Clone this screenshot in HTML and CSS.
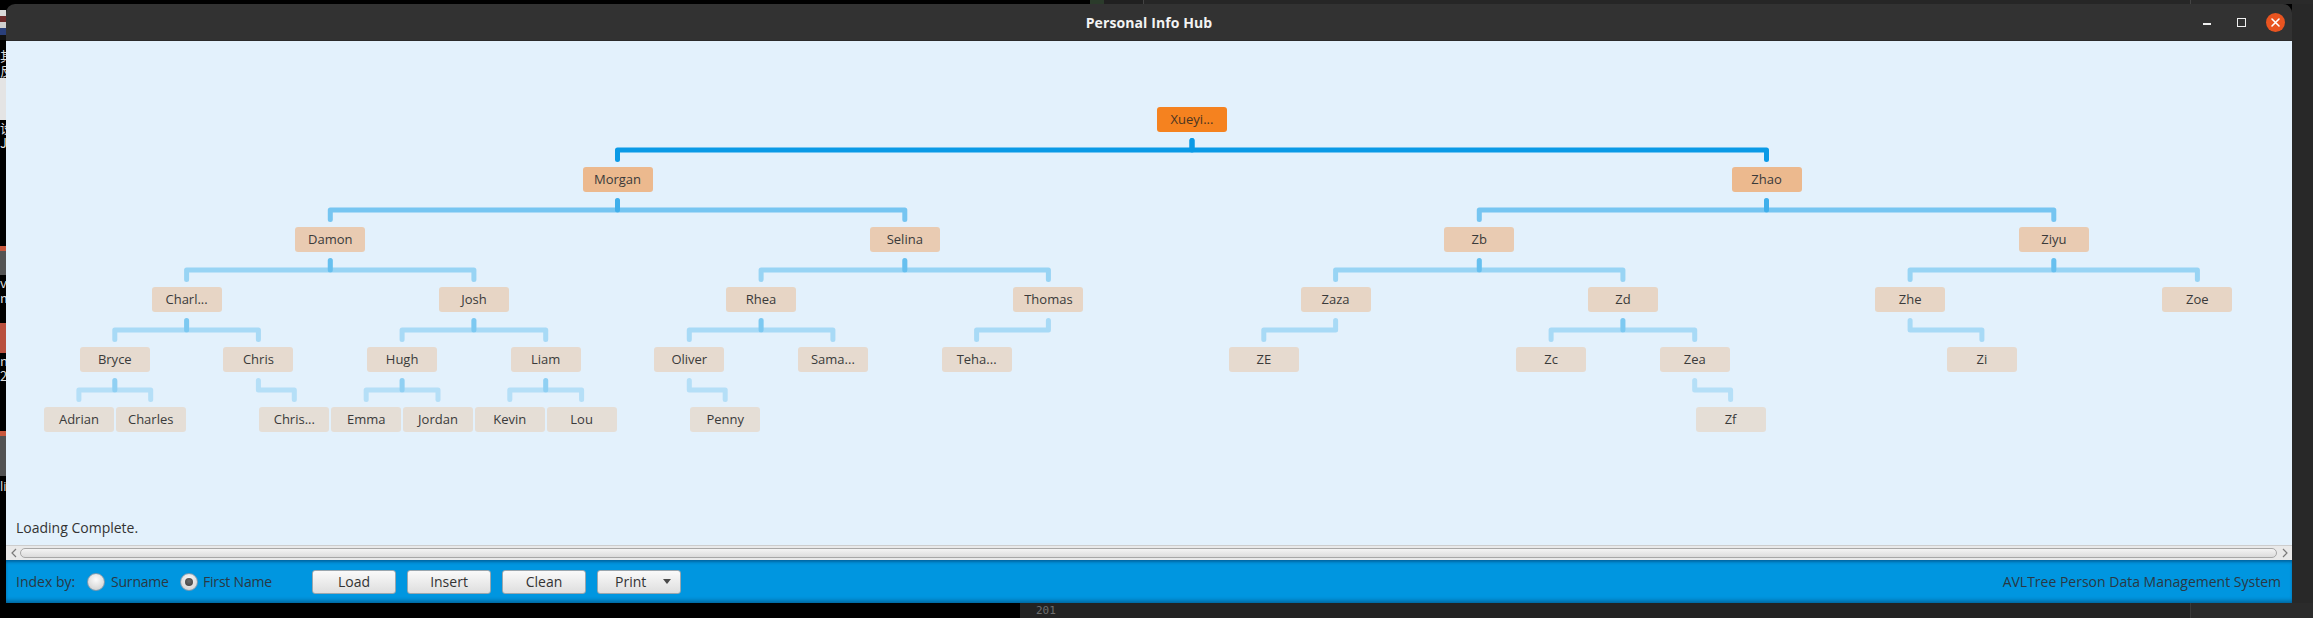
FILE: index.html
```html
<!DOCTYPE html>
<html>
<head>
<meta charset="utf-8">
<title>Personal Info Hub</title>
<link rel="stylesheet" href="styles.css">
</head>
<body>
<div class="desktop">
  <div class="top-strip">
    <div class="seg seg-black"></div>
    <div class="seg seg-green"></div>
    <div class="seg seg-dark1"></div>
    <div class="seg seg-line"></div>
    <div class="seg seg-dark2"></div>
    <div class="seg seg-line"></div>
    <div class="seg seg-dark3"></div>
  </div>
  <div class="mid">
    <div class="left-strip">
      <div class="ls ls-a"></div>
      <div class="ls ls-thumb"></div>
      <div class="ls ls-b"></div>
      <div class="ls ls-txt">其<br>反</div>
      <div class="ls ls-light"></div>
      <div class="ls ls-txt">设<br>Jd</div>
      <div class="ls ls-c"></div>
      <div class="ls ls-red"></div>
      <div class="ls ls-gray"></div>
      <div class="ls ls-txt">v<br>m</div>
      <div class="ls ls-d"></div>
      <div class="ls ls-red2"></div>
      <div class="ls ls-txt">n<br>2</div>
      <div class="ls ls-e"></div>
      <div class="ls ls-red"></div>
      <div class="ls ls-gray2"></div>
      <div class="ls ls-txt2">li</div>
      <div class="ls ls-f"></div>
    </div>
    <div class="window">
      <div class="titlebar">
        <div></div>
        <div class="title">Personal Info Hub</div>
        <div class="controls">
          <div class="ctl ctl-min"><span class="min-line"></span></div>
          <div class="ctl ctl-max"><span class="max-box"></span></div>
          <div class="ctl ctl-close">
            <svg width="19" height="19" viewBox="0 0 19 19"><circle cx="9.5" cy="9.5" r="9.5" fill="#e95420"/><path d="M6 6 L13 13 M13 6 L6 13" stroke="#fff" stroke-width="1.6" stroke-linecap="round"/></svg>
          </div>
        </div>
      </div>
      <div class="content">
        <svg class="edges" width="2286" height="470" viewBox="0 0 2286 470">
          <g class="e e0">
            <path d="M1186 99.5 V109 H611.5 V118.5"/>
            <path d="M1186 99.5 V109 H1760.5 V118.5"/>
          </g>
          <g class="e e1">
            <path d="M611.5 159.5 V169 H324.3 V178.5"/>
            <path d="M611.5 159.5 V169 H898.8 V178.5"/>
            <path d="M1760.5 159.5 V169 H1473.3 V178.5"/>
            <path d="M1760.5 159.5 V169 H2047.8 V178.5"/>
          </g>
          <g class="e e2">
            <path d="M324.3 219.5 V229 H180.6 V238.5"/>
            <path d="M324.3 219.5 V229 H467.9 V238.5"/>
            <path d="M898.8 219.5 V229 H755.1 V238.5"/>
            <path d="M898.8 219.5 V229 H1042.4 V238.5"/>
            <path d="M1473.3 219.5 V229 H1329.6 V238.5"/>
            <path d="M1473.3 219.5 V229 H1616.9 V238.5"/>
            <path d="M2047.8 219.5 V229 H1904.1 V238.5"/>
            <path d="M2047.8 219.5 V229 H2191.4 V238.5"/>
          </g>
          <g class="e e3">
            <path d="M180.6 279.5 V289 H108.8 V298.5"/>
            <path d="M180.6 279.5 V289 H252.4 V298.5"/>
            <path d="M467.9 279.5 V289 H396.1 V298.5"/>
            <path d="M467.9 279.5 V289 H539.7 V298.5"/>
            <path d="M755.1 279.5 V289 H683.3 V298.5"/>
            <path d="M755.1 279.5 V289 H826.9 V298.5"/>
            <path d="M1042.4 279.5 V289 H970.6 V298.5"/>
            <path d="M1329.6 279.5 V289 H1257.8 V298.5"/>
            <path d="M1616.9 279.5 V289 H1545.1 V298.5"/>
            <path d="M1616.9 279.5 V289 H1688.7 V298.5"/>
            <path d="M1904.1 279.5 V289 H1975.9 V298.5"/>
          </g>
          <g class="e e4">
            <path d="M108.8 339.5 V349 H72.9 V358.5"/>
            <path d="M108.8 339.5 V349 H144.7 V358.5"/>
            <path d="M252.4 339.5 V349 H288.3 V358.5"/>
            <path d="M396.1 339.5 V349 H360.2 V358.5"/>
            <path d="M396.1 339.5 V349 H432 V358.5"/>
            <path d="M539.7 339.5 V349 H503.8 V358.5"/>
            <path d="M539.7 339.5 V349 H575.6 V358.5"/>
            <path d="M683.3 339.5 V349 H719.2 V358.5"/>
            <path d="M1688.7 339.5 V349 H1724.6 V358.5"/>
          </g>
        </svg>

        <div class="node d0" style="left:1151px">Xueyi...</div>

        <div class="node d1" style="left:576.5px">Morgan</div>
        <div class="node d1" style="left:1725.5px">Zhao</div>

        <div class="node d2" style="left:289.3px">Damon</div>
        <div class="node d2" style="left:863.8px">Selina</div>
        <div class="node d2" style="left:1438.3px">Zb</div>
        <div class="node d2" style="left:2012.8px">Ziyu</div>

        <div class="node d3" style="left:145.6px">Charl...</div>
        <div class="node d3" style="left:432.9px">Josh</div>
        <div class="node d3" style="left:720.1px">Rhea</div>
        <div class="node d3" style="left:1007.4px">Thomas</div>
        <div class="node d3" style="left:1294.6px">Zaza</div>
        <div class="node d3" style="left:1581.9px">Zd</div>
        <div class="node d3" style="left:1869.1px">Zhe</div>
        <div class="node d3" style="left:2156.4px">Zoe</div>

        <div class="node d4" style="left:73.8px">Bryce</div>
        <div class="node d4" style="left:217.4px">Chris</div>
        <div class="node d4" style="left:361.1px">Hugh</div>
        <div class="node d4" style="left:504.7px">Liam</div>
        <div class="node d4" style="left:648.3px">Oliver</div>
        <div class="node d4" style="left:791.9px">Sama...</div>
        <div class="node d4" style="left:935.6px">Teha...</div>
        <div class="node d4" style="left:1222.8px">ZE</div>
        <div class="node d4" style="left:1510.1px">Zc</div>
        <div class="node d4" style="left:1653.7px">Zea</div>
        <div class="node d4" style="left:1940.9px">Zi</div>

        <div class="node d5" style="left:37.9px">Adrian</div>
        <div class="node d5" style="left:109.7px">Charles</div>
        <div class="node d5" style="left:253.3px">Chris...</div>
        <div class="node d5" style="left:325.2px">Emma</div>
        <div class="node d5" style="left:397px">Jordan</div>
        <div class="node d5" style="left:468.8px">Kevin</div>
        <div class="node d5" style="left:540.6px">Lou</div>
        <div class="node d5" style="left:684.2px">Penny</div>
        <div class="node d5" style="left:1689.6px">Zf</div>

        <div class="status">Loading Complete.</div>
      </div>
      <div class="hscroll">
        <div class="arrow arrow-left"><svg width="6" height="10" viewBox="0 0 6 10"><polyline points="5,1 1,5 5,9" fill="none" stroke="#7a7a7a" stroke-width="1.2"/></svg></div>
        <div class="thumb"></div>
        <div class="arrow arrow-right"><svg width="6" height="10" viewBox="0 0 6 10"><polyline points="1,1 5,5 1,9" fill="none" stroke="#7a7a7a" stroke-width="1.2"/></svg></div>
      </div>
      <div class="toolbar">
        <span class="tb-label">Index by:</span>
        <span class="radio"></span>
        <span class="radio-label rl-surname">Surname</span>
        <span class="radio checked"><span class="dot"></span></span>
        <span class="radio-label rl-first">First Name</span>
        <div class="buttons">
          <div class="btn">Load</div>
          <div class="btn">Insert</div>
          <div class="btn">Clean</div>
          <div class="btn btn-menu"><span>Print</span><svg width="8" height="5" viewBox="0 0 8 5"><path d="M0 0 H8 L4 5 Z" fill="#4a4a4a"/></svg></div>
        </div>
        <span class="app-name">AVLTree Person Data Management System</span>
      </div>
    </div>
    <div class="right-strip"></div>
  </div>
  <div class="bottom-strip">
    <div class="bseg bseg-black"></div>
    <div class="bseg bseg-dark"><span class="lineno">201</span></div>
    <div class="bseg bseg-line"></div>
    <div class="bseg bseg-dark2"></div>
  </div>
</div>
</body>
</html>
```

FILE: styles.css
```css
* { box-sizing: border-box; }
html, body { margin: 0; padding: 0; background: #000; }
body {
  width: 2313px;
  height: 618px;
  overflow: hidden;
  font-family: "Open Sans", "Noto Sans", sans-serif;
}
.desktop { display: flex; flex-direction: column; width: 2313px; height: 618px; }

/* top strip behind window */
.top-strip { height: 4px; display: flex; }
.seg { height: 4px; }
.seg-black { width: 1090px; background: #000; }
.seg-green { width: 14px; background: #2b3b2b; }
.seg-dark1 { width: 39px; background: #202020; }
.seg-line { width: 1px; background: #444; }
.seg-dark2 { width: 1046px; background: #262626; }
.seg-dark3 { flex: 1; background: #2a2a2a; }

.mid { display: flex; height: 599px; }

/* bits of other windows at the far left */
.left-strip { width: 6px; display: flex; flex-direction: column; overflow: hidden; background: #000; }
.ls { width: 6px; flex-shrink: 0; }
.ls-a { height: 6px; background: #000; }
.ls-thumb { height: 30px; background: linear-gradient(#d8d8d8 0 20%, #6b2a2a 20% 40%, #cfcfcf 40% 60%, #2a3f7a 60% 85%, #111 85%); }
.ls-b { height: 8px; background: #000; }
.ls-txt { height: 30px; color: #ddd; font-family: "Noto Sans CJK SC", sans-serif; font-size: 13px; line-height: 15px; overflow: hidden; }
.ls-txt2 { height: 20px; color: #ddd; font-size: 13px; line-height: 20px; overflow: hidden; }
.ls-light { height: 42px; background: #e4e4e4; }
.ls-c { height: 96px; background: #000; }
.ls-red { height: 5px; background: #c8573c; }
.ls-gray { height: 24px; background: #545454; }
.ls-d { height: 18px; background: #000; }
.ls-red2 { height: 30px; background: #b9503e; }
.ls-e { height: 48px; background: #000; }
.ls-gray2 { height: 40px; background: #525252; }
.ls-f { flex: 1; background: #000; }

.right-strip { width: 21px; background: #282828; }

/* window */
.window { width: 2286px; display: flex; flex-direction: column; }
.titlebar {
  height: 37px;
  background: #323232;
  border-radius: 9px 9px 0 0;
  display: grid;
  grid-template-columns: 1fr auto 1fr;
  align-items: center;
  border-bottom: 1px solid #2a2a2a;
}
.title {
  color: #f3f3f3;
  font-weight: 700;
  font-size: 14px;
  letter-spacing: 0.1px;
}
.controls { display: flex; justify-content: flex-end; align-items: center; padding-right: 7px; }
.ctl { display: flex; align-items: center; justify-content: center; height: 20px; }
.ctl-min { width: 20px; margin-right: 14px; }
.ctl-max { width: 20px; margin-right: 15px; }
.ctl-close { width: 19px; }
.min-line { width: 8px; height: 2px; background: #f0f0f0; margin-top: 4px; }
.max-box { width: 9px; height: 9px; border: 1.5px solid #f0f0f0; }

.content {
  height: 504px;
  background: #e3f1fc;
  position: relative;
  display: flex;
  flex-direction: column;
}
.edges { position: absolute; left: 0; top: 0; }
.e path { fill: none; stroke: #0a9ae6; stroke-width: 5; stroke-linecap: round; stroke-linejoin: round; }
.e0 path { stroke-opacity: 1; }
.e1 path { stroke-opacity: 0.5; }
.e2 path { stroke-opacity: 0.34; }
.e3 path { stroke-opacity: 0.27; }
.e4 path { stroke-opacity: 0.21; }

.node {
  position: absolute;
  width: 70px;
  height: 25px;
  border-radius: 3px;
  font-size: 13px;
  line-height: 25px;
  text-align: center;
  color: #3a3a3a;
  white-space: nowrap;
}
.d0 { top: 66px; background: #f5821f; color: #4a3522; }
.d1 { top: 126px; background: rgba(245, 130, 31, 0.5); }
.d2 { top: 186px; background: rgba(245, 130, 31, 0.333); }
.d3 { top: 246px; background: rgba(245, 130, 31, 0.25); }
.d4 { top: 306px; background: rgba(245, 130, 31, 0.2); }
.d5 { top: 366px; background: rgba(245, 130, 31, 0.167); }

.status {
  margin-top: auto;
  padding: 0 0 7px 10px;
  font-size: 14px;
  line-height: 20px;
  color: #333;
  position: relative;
}

/* horizontal scrollbar */
.hscroll {
  height: 15px;
  background: #e9e9e9;
  border-top: 1px solid #cdcdcd;
  display: flex;
  align-items: center;
}
.arrow { display: flex; align-items: center; justify-content: center; height: 12px; }
.arrow-left { width: 14px; padding-left: 1px; }
.arrow-right { width: 15px; }
.thumb {
  flex: 1;
  height: 10px;
  border: 1px solid #a7a7a7;
  border-radius: 5px;
  background: linear-gradient(#f4f4f4, #dcdcdc);
}

/* bottom toolbar */
.toolbar {
  height: 43px;
  background: #0096e0;
  box-shadow: inset 0 3px 3px -1px rgba(0, 40, 80, 0.45), inset 0 -4px 4px -2px rgba(0, 30, 60, 0.45);
  display: flex;
  align-items: center;
  padding: 0 11px 0 10px;
  font-size: 14px;
  color: #2a3844;
}
.tb-label { width: 60px; white-space: nowrap; }
.radio {
  flex-shrink: 0;
  width: 18px;
  height: 18px;
  border-radius: 50%;
  background: radial-gradient(circle at 50% 35%, #fbfbfb, #d6d6d6 75%);
  border: 1px solid #7f9aae;
  display: flex;
  align-items: center;
  justify-content: center;
  margin-left: 11px;
  margin-right: 6px;
}
.radio.checked { margin-left: 12px; margin-right: 5px; }
.dot { width: 8px; height: 8px; border-radius: 50%; background: radial-gradient(circle at 50% 40%, #6a6a6a, #3c3c3c); }
.radio-label { white-space: nowrap; }
.rl-surname { width: 57px; letter-spacing: -0.2px; }
.rl-first { width: 70px; letter-spacing: -0.2px; }
.buttons { display: flex; gap: 11px; margin-left: 39px; }
.btn {
  width: 84px;
  height: 24px;
  border: 1px solid #9aa6ae;
  border-radius: 3px;
  background: linear-gradient(#fafafa, #dedede);
  display: flex;
  align-items: center;
  justify-content: center;
  color: #333;
  font-size: 14px;
}
.btn-menu { justify-content: space-between; padding: 0 9px 0 17px; }
.app-name { margin-left: auto; white-space: nowrap; }

/* bottom strip behind window */
.bottom-strip { height: 15px; display: flex; }
.bseg { height: 15px; }
.bseg-black { width: 1020px; background: #000; }
.bseg-dark { width: 1170px; background: #232323; position: relative; }
.lineno { display: block; padding-left: 16px; color: #6e6e6e; font-family: "DejaVu Sans Mono", monospace; font-size: 11px; line-height: 15px; }
.bseg-line { width: 1px; background: #3a3a3a; }
.bseg-dark2 { flex: 1; background: #2b2b2b; }
```
